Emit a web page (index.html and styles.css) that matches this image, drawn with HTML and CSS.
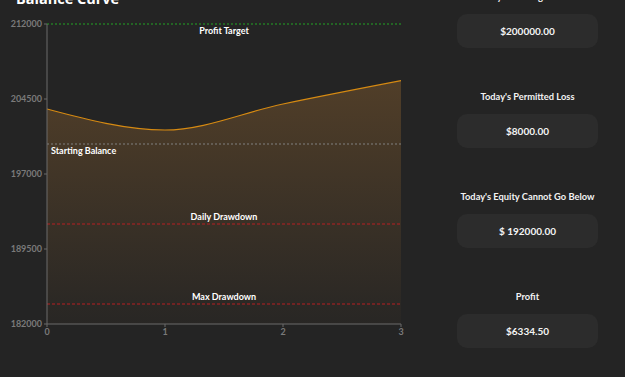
FILE: index.html
```html
<!DOCTYPE html>
<html>
<head>
<meta charset="utf-8">
<link rel="stylesheet" href="styles.css">
</head>
<body>
<div class="page">
  <section class="chart-section">
    <h2 class="title">Balance Curve</h2>
    <svg class="chart" width="420" height="345" viewBox="0 12 420 345">
      <defs>
        <linearGradient id="fillGrad" x1="0" y1="80" x2="0" y2="324" gradientUnits="userSpaceOnUse">
          <stop offset="0" stop-color="rgb(176,118,50)" stop-opacity="0.32"/>
          <stop offset="1" stop-color="rgb(176,118,50)" stop-opacity="0.03"/>
        </linearGradient>
      </defs>
      <path class="area" d="M47,109 C86.3,119.5 125.7,130 165,130 C204.3,130 243.7,112.2 283,104 C322.3,95.8 361.7,88.2 401,80.65 L401,324 L47,324 Z"/>
      <path class="line" d="M47,109 C86.3,119.5 125.7,130 165,130 C204.3,130 243.7,112.2 283,104 C322.3,95.8 361.7,88.2 401,80.65"/>
      <line class="ref-target" x1="47" y1="24" x2="401" y2="24"/>
      <line class="ref-start" x1="47" y1="144" x2="401" y2="144"/>
      <line class="ref-dd" x1="47" y1="224" x2="401" y2="224"/>
      <line class="ref-dd" x1="47" y1="304" x2="401" y2="304"/>
      <text class="ref-label" x="224" y="34" text-anchor="middle">Profit Target</text>
      <text class="ref-label" x="51" y="154">Starting Balance</text>
      <text class="ref-label" x="224" y="220" text-anchor="middle">Daily Drawdown</text>
      <text class="ref-label" x="224" y="300" text-anchor="middle">Max Drawdown</text>
      <line class="axis" x1="47" y1="24" x2="47" y2="324"/>
      <line class="axis" x1="47" y1="324" x2="401" y2="324"/>
      <g class="ticks">
        <line x1="44" y1="24" x2="47" y2="24"/>
        <line x1="44" y1="99" x2="47" y2="99"/>
        <line x1="44" y1="174" x2="47" y2="174"/>
        <line x1="44" y1="249" x2="47" y2="249"/>
        <line x1="44" y1="324" x2="47" y2="324"/>
        <line x1="47" y1="324" x2="47" y2="327"/>
        <line x1="165" y1="324" x2="165" y2="327"/>
        <line x1="283" y1="324" x2="283" y2="327"/>
        <line x1="401" y1="324" x2="401" y2="327"/>
      </g>
      <g class="ytext">
        <text x="42" y="27" text-anchor="end">212000</text>
        <text x="42" y="102" text-anchor="end">204500</text>
        <text x="42" y="177" text-anchor="end">197000</text>
        <text x="42" y="252" text-anchor="end">189500</text>
        <text x="42" y="327" text-anchor="end">182000</text>
      </g>
      <g class="xtext">
        <text x="47" y="335" text-anchor="middle">0</text>
        <text x="165" y="335" text-anchor="middle">1</text>
        <text x="283" y="335" text-anchor="middle">2</text>
        <text x="401" y="335" text-anchor="middle">3</text>
      </g>
    </svg>
  </section>
  <aside class="stats">
    <div class="stat">
      <div class="stat-label">Today's Starting Balance</div>
      <div class="stat-card">$200000.00</div>
    </div>
    <div class="stat">
      <div class="stat-label">Today's Permitted Loss</div>
      <div class="stat-card">$8000.00</div>
    </div>
    <div class="stat">
      <div class="stat-label">Today's Equity Cannot Go Below</div>
      <div class="stat-card">$ 192000.00</div>
    </div>
    <div class="stat">
      <div class="stat-label">Profit</div>
      <div class="stat-card">$6334.50</div>
    </div>
  </aside>
</div>
</body>
</html>
```

FILE: styles.css
```css
html, body {
  margin: 0;
  padding: 0;
  background: #242424;
  overflow: hidden;
}
body {
  font-family: "Lato", "Open Sans", sans-serif;
  color: #f2f2f2;
}
.page {
  display: flex;
  margin-top: -11px;
}
.chart-section {
  width: 420px;
  display: flex;
  flex-direction: column;
}
.title {
  margin: 0 0 3px 16px;
  font-family: "Open Sans", sans-serif;
  font-size: 14.5px;
  line-height: 20px;
  font-weight: 700;
  color: #ffffff;
}
.chart {
  display: block;
}
.area {
  fill: url(#fillGrad);
}
.line {
  fill: none;
  stroke: #d68a12;
  stroke-width: 1.2;
}
.ref-target {
  stroke: #237a25;
  stroke-width: 1.5;
  stroke-dasharray: 2 2;
}
.ref-start {
  stroke: #808080;
  stroke-width: 1;
  stroke-dasharray: 2 2;
}
.ref-dd {
  stroke: #b81e22;
  stroke-width: 1;
  stroke-dasharray: 3 2;
}
.ref-label {
  font-family: "Lato", sans-serif;
  font-weight: 700;
  font-size: 9px;
  fill: #ffffff;
}
.axis, .ticks line {
  stroke: #6a6a6a;
  stroke-width: 1;
}
.ytext text, .xtext text {
  font-family: "Lato", sans-serif;
  font-size: 9px;
  font-weight: 700;
  fill: #7a7a7a;
}
.stats {
  margin-left: 37px;
  width: 141px;
  padding-top: 2px;
  display: flex;
  flex-direction: column;
  gap: 43px;
}
.stat {
  display: flex;
  flex-direction: column;
  align-items: stretch;
}
.stat-label {
  height: 12px;
  line-height: 12px;
  font-size: 9.3px;
  font-weight: 700;
  text-align: center;
  white-space: nowrap;
  margin-bottom: 11px;
  color: #f2f2f2;
}
.stat-card {
  height: 34px;
  border-radius: 10px;
  background: #2c2c2c;
  display: flex;
  align-items: center;
  justify-content: center;
  font-size: 10px;
  font-weight: 700;
  color: #f4f4f4;
}
```
